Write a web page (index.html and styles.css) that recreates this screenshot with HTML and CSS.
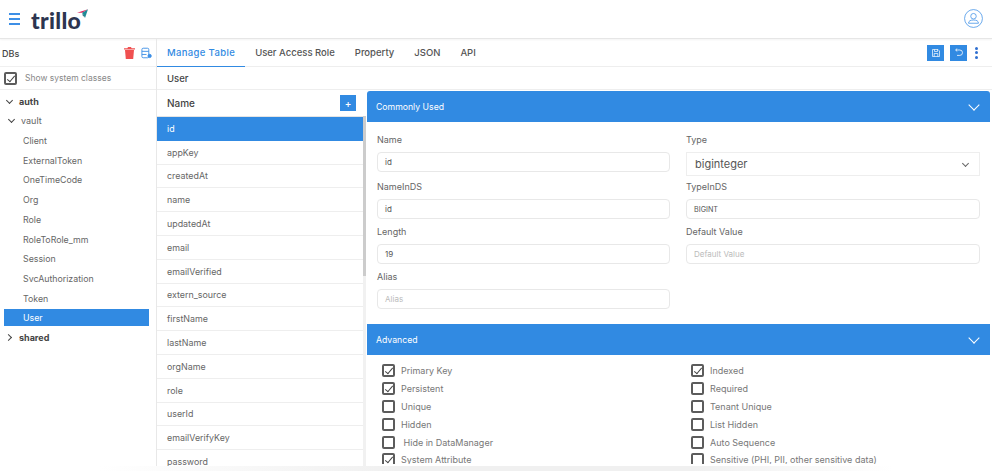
FILE: index.html
```html
<!DOCTYPE html>
<html lang="en">
<head>
    <meta charset="UTF-8">
    <title>Trillo - Manage Table</title>
    <link rel="stylesheet" href="styles.css">
</head>
<body>
    <header class="topbar">
        <div class="burger"><span></span><span></span><span></span></div>
        <div class="logo">trillo</div>
        <svg class="logo-mark" width="11" height="9" viewBox="0 0 19 15">
            <path d="M0 6 L19 0 L9 6 Z" fill="#e0245e"/>
            <path d="M19 0 L9 6 L14 15 Z" fill="#1f8a96"/>
            <path d="M9 6 L10 11 L14 15 Z" fill="#16606e"/>
        </svg>
        <svg class="avatar" width="19" height="19" viewBox="0 0 20 20" fill="none" stroke="#3d8fe6" stroke-width="0.8">
            <circle cx="10" cy="10" r="9.4"/>
            <circle cx="10" cy="7.6" r="2.9"/>
            <path d="M4.8 15 C4.8 12.4 7 11.6 10 11.6 C13 11.6 15.2 12.4 15.2 15 Z"/>
        </svg>
    </header>

    <div class="app">
        <aside class="sidebar">
            <div class="side-head">
                <span>DBs</span>
                <span class="side-icons">
                    <svg width="11" height="12" viewBox="0 0 11 12"><path d="M1 3h9l-.8 9H1.8zM0 1.2h3.4L4 0h3l.6 1.2H11v1.2H0z" fill="#f05050"/></svg>
                    <svg width="11" height="12" viewBox="0 0 12 12" fill="none" stroke="#3d8fe6" stroke-width="1"><rect x="1" y="0.8" width="7.5" height="10.4" rx="1.4"/><path d="M1 4.2h7.5M1 7.6h5"/><circle cx="9.4" cy="9.2" r="1.8" fill="#3d8fe6"/></svg>
                </span>
            </div>
            <label class="side-check">
                <span class="box checked"></span>
                <span>Show system classes</span>
            </label>
            <ul class="tree">
                <li class="tree-row strong"><span class="caret down"></span>auth</li>
                <li class="tree-row sub"><span class="caret down"></span>vault</li>
                <li class="tree-row leaf">Client</li>
                <li class="tree-row leaf">ExternalToken</li>
                <li class="tree-row leaf">OneTimeCode</li>
                <li class="tree-row leaf">Org</li>
                <li class="tree-row leaf">Role</li>
                <li class="tree-row leaf">RoleToRole_mm</li>
                <li class="tree-row leaf">Session</li>
                <li class="tree-row leaf">SvcAuthorization</li>
                <li class="tree-row leaf">Token</li>
                <li class="tree-row leaf active">User</li>
                <li class="tree-row strong"><span class="caret right"></span>shared</li>
            </ul>
        </aside>

        <main class="content">
            <div class="tabs">
                <a class="tab current">Manage Table</a>
                <a class="tab">User Access Role</a>
                <a class="tab">Property</a>
                <a class="tab">JSON</a>
                <a class="tab">API</a>
                <div class="tab-actions">
                    <span class="icon-btn">
                        <svg width="8" height="8" viewBox="0 0 8 8" fill="none" stroke="#fff" stroke-width="0.7"><path d="M.5.5h5.5l1.5 1.5v5.5h-7z"/><path d="M2.5 .5v2h3v-2M2.2 7.5v-3h3.6v3"/></svg>
                    </span>
                    <span class="icon-btn">
                        <svg width="9" height="9" viewBox="0 0 9 9" fill="none" stroke="#fff" stroke-width="0.8"><path d="M1.8 2h4a2.4 2.4 0 0 1 0 5.4H3"/><path d="M3.2 .6 1.6 2l1.6 1.4"/></svg>
                    </span>
                    <span class="dots"><i></i><i></i><i></i></span>
                </div>
            </div>
            <div class="crumb">User</div>

            <div class="workspace">
                <section class="attrs">
                    <div class="attrs-head">
                        <span>Name</span>
                        <span class="add-btn">+</span>
                    </div>
                    <div class="attrs-body">
                        <ul class="attr-list">
                            <li class="selected">id</li>
                            <li>appKey</li>
                            <li>createdAt</li>
                            <li>name</li>
                            <li>updatedAt</li>
                            <li>email</li>
                            <li>emailVerified</li>
                            <li>extern_source</li>
                            <li>firstName</li>
                            <li>lastName</li>
                            <li>orgName</li>
                            <li>role</li>
                            <li>userId</li>
                            <li>emailVerifyKey</li>
                            <li>password</li>
                        </ul>
                    </div>
                </section>

                <section class="detail">
                    <div class="panel-head first">
                        <span>Commonly Used</span>
                        <span class="panel-chevron"></span>
                    </div>
                    <div class="form-grid">
                        <div class="field"><label>Name</label><div class="input">id</div></div>
                        <div class="field"><label>Type</label><div class="select">biginteger<span class="select-arrow"></span></div></div>
                        <div class="field"><label>NameInDS</label><div class="input">id</div></div>
                        <div class="field"><label>TypeInDS</label><div class="input caps">BIGINT</div></div>
                        <div class="field"><label>Length</label><div class="input">19</div></div>
                        <div class="field"><label>Default Value</label><div class="input empty">Default Value</div></div>
                        <div class="field"><label>Alias</label><div class="input empty">Alias</div></div>
                    </div>

                    <div class="panel-head">
                        <span>Advanced</span>
                        <span class="panel-chevron"></span>
                    </div>
                    <div class="check-grid">
                        <div class="check"><span class="box checked"></span>Primary Key</div>
                        <div class="check"><span class="box checked"></span>Indexed</div>
                        <div class="check"><span class="box checked"></span>Persistent</div>
                        <div class="check"><span class="box"></span>Required</div>
                        <div class="check"><span class="box"></span>Unique</div>
                        <div class="check"><span class="box"></span>Tenant Unique</div>
                        <div class="check"><span class="box"></span>Hidden</div>
                        <div class="check"><span class="box"></span>List Hidden</div>
                        <div class="check"><span class="box"></span>&nbsp;Hide in DataManager</div>
                        <div class="check"><span class="box"></span>Auto Sequence</div>
                        <div class="check"><span class="box checked"></span>System Attribute</div>
                        <div class="check"><span class="box"></span>Sensitive (PHI, PII, other sensitive data)</div>
                    </div>
                </section>
            </div>
        </main>
    </div>
    <div class="bottom-fade"></div>
</body>
</html>
```

FILE: styles.css
```css
* {
    box-sizing: border-box;
    margin: 0;
    padding: 0;
}
body {
    height: 471px;
    overflow: hidden;
    position: relative;
    background-color: white;
    font-family: "Inter", "Open Sans", sans-serif;
    font-size: 9px;
    color: #666;
}
ul {
    list-style: none;
}

/* top bar */
.topbar {
    display: flex;
    align-items: center;
    height: 39px;
    padding: 0 9px 0 9px;
    border-bottom: 1px solid #e6e6e6;
    box-shadow: 0 1px 2px rgba(0, 0, 0, 0.05);
}
.burger {
    display: flex;
    flex-direction: column;
    gap: 3px;
    width: 11px;
    margin-right: 11px;
}
.burger span {
    height: 2px;
    background-color: #3d8fe6;
}
.logo {
    font-family: "Lato", sans-serif;
    font-size: 23px;
    font-weight: 900;
    letter-spacing: 0.3px;
    color: #2d3550;
    padding-top: 1px;
}
.logo-mark {
    align-self: flex-start;
    margin: 9px 0 0 -4px;
}
.avatar {
    margin-left: auto;
    margin-top: -2px;
}

.app {
    display: flex;
    height: 432px;
}

/* left tree */
.sidebar {
    width: 157px;
    flex-shrink: 0;
    border-right: 1px solid #e8e8e8;
}
.side-head {
    display: flex;
    align-items: center;
    justify-content: space-between;
    height: 28px;
    padding: 1px 4px 0 2px;
    font-weight: 500;
    color: #444;
    border-bottom: 1px solid #f0f0f0;
}
.side-icons {
    display: flex;
    align-items: center;
    gap: 6px;
}
.side-check {
    display: flex;
    align-items: center;
    gap: 8px;
    height: 23px;
    padding-left: 4px;
    font-size: 8.5px;
    color: #888;
    border-bottom: 1px solid #eee;
}
.box {
    position: relative;
    flex-shrink: 0;
    display: block;
    width: 13px;
    height: 13px;
    border: 2px solid #5c5c5c;
    border-radius: 2px;
    background-color: white;
}
.box.checked::after {
    content: "";
    position: absolute;
    left: 3px;
    top: 0;
    width: 3px;
    height: 7px;
    border: solid #444;
    border-width: 0 1.2px 1.2px 0;
    transform: rotate(40deg);
}
.tree {
    padding: 1.4px 7px 0 4px;
}
.tree-row {
    display: flex;
    align-items: center;
    height: 19.7px;
}
.tree-row.strong {
    font-weight: 700;
    color: #444;
    padding-left: 2px;
}
.tree-row.sub {
    padding-left: 4px;
}
.tree-row.leaf {
    padding-left: 19px;
    font-size: 8.8px;
}
.tree-row.active {
    background-color: #318ae2;
    color: white;
    height: 17.5px;
    margin: 1px 0;
}
.caret {
    display: block;
    width: 5px;
    height: 5px;
    margin-right: 8px;
    border: solid #444;
    border-width: 0 1.3px 1.3px 0;
}
.caret.down {
    transform: translate(1px, -1px) rotate(45deg);
}
.caret.right {
    transform: rotate(-45deg);
}

/* tabs */
.content {
    flex: 1;
    min-width: 0;
}
.tabs {
    display: flex;
    align-items: stretch;
    height: 28px;
    border-bottom: 1px solid #eee;
    padding-right: 14px;
}
.tab {
    display: flex;
    align-items: center;
    padding: 0 10px;
    font-size: 9.5px;
    font-weight: 500;
    color: #555;
}
.tab.current {
    color: #318ae2;
    letter-spacing: 0.35px;
    border-bottom: 1.5px solid #318ae2;
    margin-bottom: -1px;
}
.tab-actions {
    display: flex;
    align-items: center;
    gap: 6px;
    margin-left: auto;
}
.icon-btn {
    display: flex;
    align-items: center;
    justify-content: center;
    width: 17px;
    height: 16px;
    background-color: #318ae2;
}
.dots {
    display: flex;
    flex-direction: column;
    gap: 1.5px;
    margin-left: 2px;
}
.dots i {
    display: block;
    width: 3px;
    height: 3px;
    border-radius: 50%;
    background-color: #2f6fd0;
}
.crumb {
    height: 23px;
    padding: 6px 0 0 10px;
    font-size: 9.5px;
    font-weight: 500;
    color: #444;
    border-bottom: 1px solid #eee;
}

.workspace {
    display: flex;
    height: 381px;
}

/* attribute list */
.attrs {
    width: 209px;
    flex-shrink: 0;
}
.attrs-head {
    display: flex;
    align-items: center;
    justify-content: space-between;
    height: 26px;
    padding: 0 10px 0 10px;
    font-size: 10px;
    font-weight: 500;
    color: #444;
}
.add-btn {
    display: flex;
    align-items: center;
    justify-content: center;
    width: 16px;
    height: 16px;
    background-color: #318ae2;
    color: white;
    font-size: 10px;
}
.attrs-body {
    position: relative;
    border-right: 3px solid #f1f1f1;
    height: 355px;
    border-top: 1px solid #e4e4e4;
}
/* scrollbar thumb */
.attrs-body::after {
    content: "";
    position: absolute;
    top: -1px;
    right: -3px;
    width: 3px;
    height: 160px;
    background-color: #ccc;
}
.attr-list li {
    display: flex;
    align-items: center;
    height: 23.8px;
    padding-left: 10px;
    font-size: 8.9px;
    border-bottom: 1px solid #eee;
}
.attr-list li.selected {
    background-color: #318ae2;
    color: white;
    border-bottom: none;
}

/* detail panels */
.detail {
    flex: 1;
    min-width: 0;
    height: 373px;
    overflow: hidden;
    margin-right: 2px;
    margin-top: 1px;
    padding-left: 1px;
}
.panel-head {
    display: flex;
    align-items: center;
    justify-content: space-between;
    height: 31px;
    padding: 0 12px 0 9px;
    font-size: 8.7px;
    background-color: #318ae2;
    color: white;
}
.panel-head.first {
    border-radius: 3px 3px 0 0;
}
.panel-chevron {
    width: 8px;
    height: 8px;
    border: solid white;
    border-width: 0 1.3px 1.3px 0;
    transform: translateY(-2px) rotate(45deg);
}
.form-grid {
    display: grid;
    grid-template-columns: 293px 294px;
    grid-template-rows: 47px 45px 45px 45px;
    column-gap: 16px;
    height: 202px;
    padding: 12px 10px 0;
}
.field label {
    display: block;
    height: 18px;
}
.input {
    display: flex;
    align-items: center;
    height: 20px;
    padding: 0 7px;
    font-size: 8px;
    color: #555;
    border: 1px solid #e8e8e8;
    border-radius: 4px;
}
.input.caps {
    font-size: 7.2px;
}
.input.empty {
    color: #bbb;
}
.select {
    position: relative;
    display: flex;
    align-items: center;
    height: 24px;
    padding: 0 8px;
    font-size: 11px;
    color: #555;
    border: 1px solid #eee;
}
.select-arrow {
    position: absolute;
    right: 11px;
    top: 8px;
    width: 5px;
    height: 5px;
    border: solid #666;
    border-width: 0 1px 1px 0;
    transform: rotate(45deg);
}
.check-grid {
    display: grid;
    grid-template-columns: 309px 1fr;
    grid-auto-rows: 17.8px;
    padding: 7px 15px 0;
}
.check {
    display: flex;
    align-items: center;
    gap: 6px;
    color: #777;
    white-space: nowrap;
}
.bottom-fade {
    position: absolute;
    left: 0;
    right: 0;
    bottom: 0;
    height: 5px;
    background-image: linear-gradient(to right, white 10%, #f0f0f0 40%, #f0f0f0 70%, white 90%);
}
```
